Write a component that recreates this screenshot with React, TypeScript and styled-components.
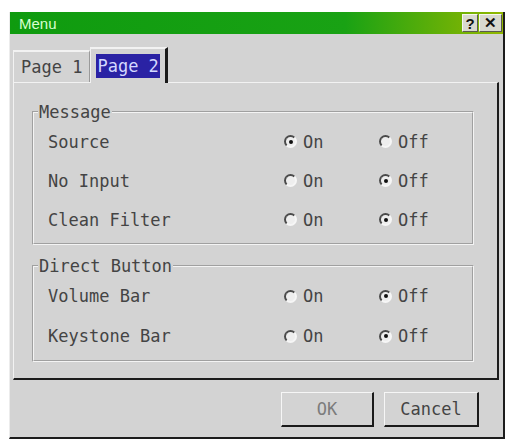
import React from 'react'
import styled, { createGlobalStyle } from 'styled-components'

const GlobalStyle = createGlobalStyle`
  html, body {
    margin: 0;
    padding: 0;
    background: #ffffff;
  }
`

const FONT = `"DejaVu Sans Mono", "Liberation Mono", monospace`

const Window = styled.div`
  margin: 12px 0 0 9px;
  width: 496px;
  height: 427px;
  box-sizing: border-box;
  background: #d3d3d3;
  border-left: 1px solid #ececec;
  border-right: 2px solid #1c1c1c;
  border-bottom: 2px solid #1c1c1c;
  display: flex;
  flex-direction: column;
  font-family: ${FONT};
  color: #444;
`

const TitleBar = styled.div`
  height: 22px;
  display: flex;
  align-items: center;
  justify-content: space-between;
  padding: 0 1px 0 9px;
  background: linear-gradient(90deg, #0f9b0f 0%, #19a214 68%, #92b800 100%);
`

const Title = styled.span`
  font-family: "Liberation Sans", Arial, sans-serif;
  font-size: 15px;
  color: #d8ffcf;
`

const TitleButtons = styled.div`
  display: flex;
  gap: 1px;
`

const TitleButton = styled.span<{ $w: number }>`
  width: ${p => p.$w}px;
  height: 18px;
  box-sizing: border-box;
  display: flex;
  align-items: center;
  justify-content: center;
  background: #d9d9cf;
  border-top: 1px solid #f6f6f0;
  border-left: 1px solid #f6f6f0;
  border-right: 1px solid #5a5a50;
  border-bottom: 1px solid #5a5a50;
  font-family: "Liberation Sans", Arial, sans-serif;
  font-weight: bold;
  font-size: 15px;
  color: #111;
`

const TabRow = styled.div`
  margin: 13px 0 0 3px;
  display: flex;
  align-items: flex-end;
  height: 35px;
`

const Tab = styled.div<{ $active?: boolean }>`
  height: ${p => (p.$active ? 36 : 32)}px;
  box-sizing: border-box;
  padding: 0 ${p => (p.$active ? 5 : 6)}px;
  margin-bottom: ${p => (p.$active ? -1 : 0)}px;
  display: flex;
  align-items: center;
  font-size: 17px;
  border-top: 2px solid #f2f2f2;
  border-left: 1px solid #f2f2f2;
  border-right: ${p => (p.$active ? '3px solid #1a1a1a' : '1px solid #9a9a9a')};
  background: #d3d3d3;
  position: relative;
  z-index: ${p => (p.$active ? 1 : 0)};
`

const TabLabel = styled.span<{ $active?: boolean }>`
  padding: 2px 1px;
  background: ${p => (p.$active ? '#2a22a4' : 'transparent')};
  color: ${p => (p.$active ? '#d4d8ff' : '#444')};
`

const Panel = styled.div`
  margin: 0 4px 0 3px;
  height: 298px;
  box-sizing: border-box;
  border-top: 1px solid #f2f2f2;
  border-left: 1px solid #f2f2f2;
  border-right: 2px solid #1c1c1c;
  border-bottom: 2px solid #1c1c1c;
  padding: 19px 23px 0 18px;
  display: flex;
  flex-direction: column;
  gap: 11px;
`

const Group = styled.fieldset`
  margin: 0;
  padding: 0 0 4px 0;
  border: 2px groove #f4f4f4;
  min-width: 0;
`

const Legend = styled.legend`
  margin-left: 4px;
  padding: 0 1px;
  font-size: 17px;
  line-height: 20px;
`

const Row = styled.div<{ $h: number }>`
  height: ${p => p.$h}px;
  display: grid;
  grid-template-columns: 236px 95px auto;
  align-items: center;
  padding-left: 14px;
  font-size: 17px;
`

const Option = styled.span`
  display: flex;
  align-items: center;
  gap: 6px;
`

const RadioDot = styled.span<{ $on?: boolean }>`
  width: 13px;
  height: 13px;
  box-sizing: border-box;
  border-radius: 50%;
  border: 2px solid;
  border-color: #4a4a4a #f6f6f6 #f6f6f6 #4a4a4a;
  background: #eeeeee;
  display: flex;
  align-items: center;
  justify-content: center;
  &::after {
    content: '';
    width: 4px;
    height: 4px;
    border-radius: 50%;
    background: ${p => (p.$on ? '#111' : 'transparent')};
  }
`

const Footer = styled.div`
  flex: 1;
  display: flex;
  justify-content: flex-end;
  align-items: flex-start;
  gap: 10px;
  padding: 12px 24px 0 0;
`

const Button = styled.button<{ $w: number; $dim?: boolean }>`
  width: ${p => p.$w}px;
  height: 35px;
  box-sizing: border-box;
  background: #d3d3d3;
  border-top: 1px solid #f6f6f6;
  border-left: 1px solid #f6f6f6;
  border-right: 2px solid #1a1a1a;
  border-bottom: 2px solid #1a1a1a;
  font-family: ${FONT};
  font-size: 17px;
  color: ${p => (p.$dim ? '#7c7c7c' : '#444')};
  padding: 0;
`

type Setting = { label: string; on: boolean }

const message: Setting[] = [
  { label: 'Source', on: true },
  { label: 'No Input', on: false },
  { label: 'Clean Filter', on: false },
]

const direct: Setting[] = [
  { label: 'Volume Bar', on: false },
  { label: 'Keystone Bar', on: false },
]

const SettingRow = ({ s, h }: { s: Setting; h: number }) => (
  <Row $h={h}>
    <span>{s.label}</span>
    <Option>
      <RadioDot $on={s.on} />
      On
    </Option>
    <Option>
      <RadioDot $on={!s.on} />
      Off
    </Option>
  </Row>
)

export default function App() {
  return (
    <>
      <GlobalStyle />
      <Window>
        <TitleBar>
          <Title>Menu</Title>
          <TitleButtons>
            <TitleButton $w={16}>?</TitleButton>
            <TitleButton $w={23}>✕</TitleButton>
          </TitleButtons>
        </TitleBar>
        <TabRow>
          <Tab>
            <TabLabel>Page 1</TabLabel>
          </Tab>
          <Tab $active>
            <TabLabel $active>Page 2</TabLabel>
          </Tab>
        </TabRow>
        <Panel>
          <Group>
            <Legend>Message</Legend>
            {message.map(s => (
              <SettingRow key={s.label} s={s} h={39} />
            ))}
          </Group>
          <Group>
            <Legend>Direct Button</Legend>
            {direct.map(s => (
              <SettingRow key={s.label} s={s} h={40} />
            ))}
          </Group>
        </Panel>
        <Footer>
          <Button $w={93} $dim>OK</Button>
          <Button $w={95}>Cancel</Button>
        </Footer>
      </Window>
    </>
  )
}
